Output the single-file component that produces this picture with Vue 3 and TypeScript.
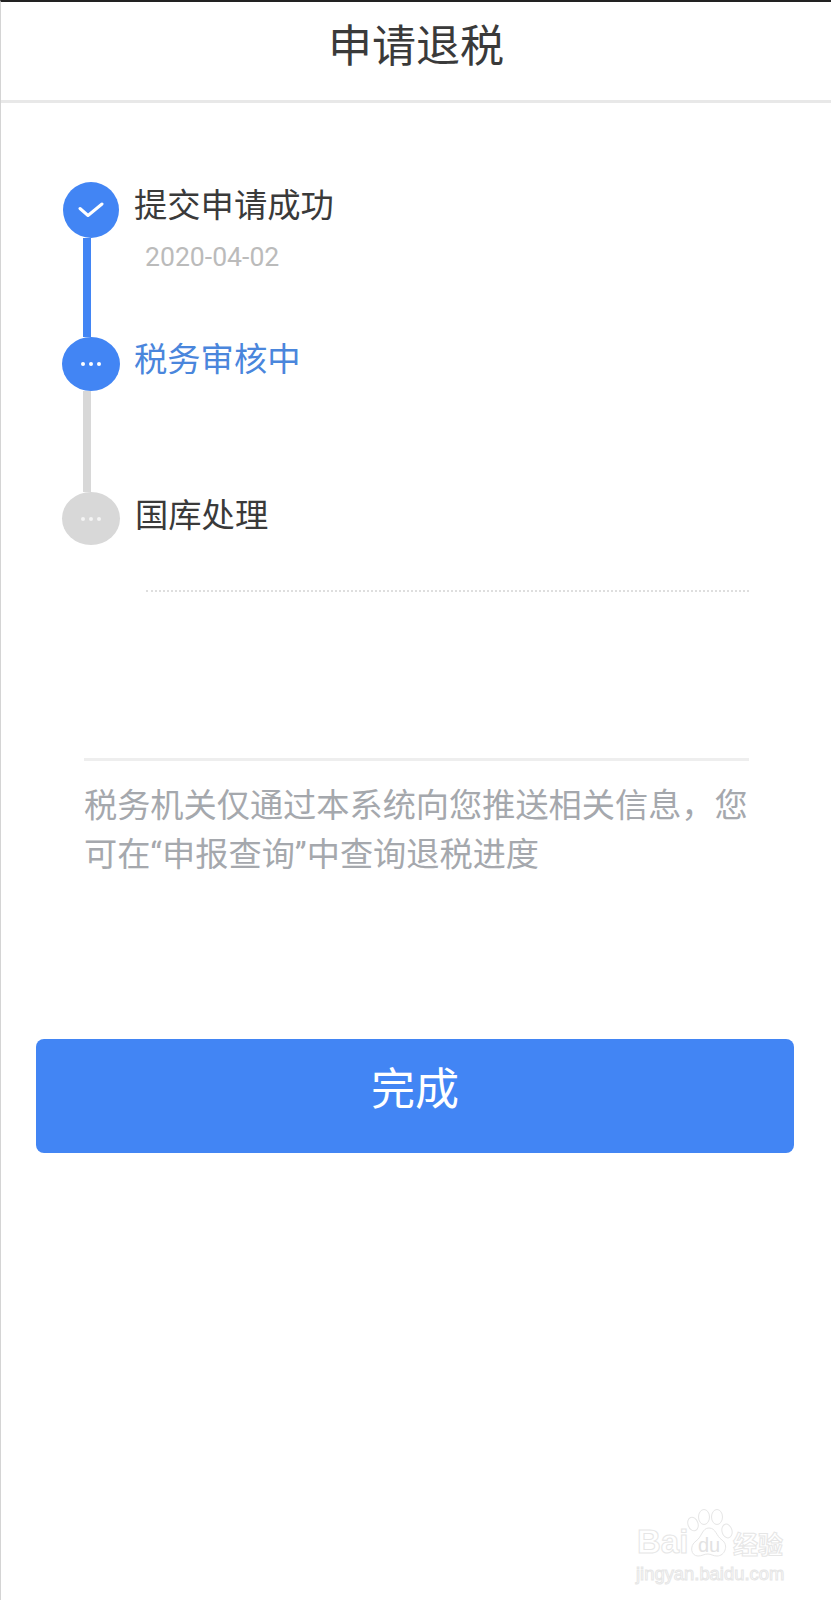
<script setup lang="ts">
interface Step {
  title: string
  date?: string
  state: 'done' | 'active' | 'todo'
}

const steps: Step[] = [
  { title: '提交申请成功', date: '2020-04-02', state: 'done' },
  { title: '税务审核中', state: 'active' },
  { title: '国库处理', state: 'todo' },
]
</script>

<template>
  <div class="page">
    <header class="header">申请退税</header>

    <section class="timeline">
      <div v-for="(step, i) in steps" :key="step.title" class="step" :class="step.state">
        <div class="rail">
          <div class="dot">
            <svg v-if="step.state === 'done'" width="26" height="16" viewBox="0 0 26 16">
              <path d="M2 6.5 L10 13.5 L24 2" fill="none" stroke="#fff" stroke-width="3" stroke-linecap="round" stroke-linejoin="round" />
            </svg>
            <span v-else class="dots"><i></i><i></i><i></i></span>
          </div>
          <div v-if="i < steps.length - 1" class="line"></div>
        </div>
        <div class="body">
          <div class="title">{{ step.title }}</div>
          <div v-if="step.date" class="date">{{ step.date }}</div>
        </div>
      </div>
    </section>

    <div class="dotted"></div>

    <section class="notice">
      <p>税务机关仅通过本系统向您推送相关信息，您可在“申报查询”中查询退税进度</p>
    </section>

    <button class="finish" type="button">完成</button>

    <div class="watermark">
      <svg class="paw" width="46" height="50" viewBox="0 0 46 50">
        <g fill="#fff" stroke="#e6e6e6" stroke-width="1">
          <ellipse cx="6" cy="15" rx="5" ry="7" transform="rotate(-20 6 15)" />
          <ellipse cx="17" cy="8" rx="5.5" ry="7.5" />
          <ellipse cx="30" cy="8" rx="5.5" ry="7.5" />
          <ellipse cx="40" cy="22" rx="5" ry="7" transform="rotate(-15 40 22)" />
          <path d="M22 19 C29 19 29 27 35 31 C42 36 38 47 30 47 C26 47 24 45 21 45 C17 45 15 47 11 47 C4 47 2 37 9 32 C15 28 15 19 22 19 Z" />
        </g>
      </svg>
      <span class="wm-bai">Bai</span>
      <span class="wm-du">du</span>
      <span class="wm-cn">经验</span>
      <span class="wm-url">jingyan.baidu.com</span>
    </div>
  </div>
</template>

<style scoped>
.page {
  position: relative;
  box-sizing: border-box;
  width: 831px;
  height: 1600px;
  overflow: hidden;
  background: #fff;
  border-top: 2px solid #222;
  border-left: 1px solid #d4d4d4;
  font-family: "Noto Sans CJK SC", "Noto Sans", sans-serif;
  color: #3a3a3a;
}

.header {
  box-sizing: border-box;
  height: 101px;
  line-height: 82px;
  border-bottom: 3px solid #e8e8e8;
  text-align: center;
  font-size: 44px;
  color: #3a3a3a;
}

.timeline {
  display: flex;
  flex-direction: column;
  padding: 79px 0 0 61px;
}

.step {
  display: flex;
  gap: 14px;
  height: 155px;
}

.step.todo {
  height: 53px;
}

.rail {
  display: flex;
  flex-direction: column;
  align-items: flex-start;
  width: 58px;
}

.dot {
  display: flex;
  flex: none;
  align-items: center;
  justify-content: center;
  width: 58px;
  height: 54px;
  border-radius: 50%;
  background: #4285f4;
}

.done .dot {
  width: 56px;
  height: 56px;
  margin-left: 1px;
}

.todo .dot {
  height: 53px;
  background: #d8d8d8;
}

.line {
  flex: 1;
  width: 8px;
  margin-left: 21px;
  background: #4285f4;
}

.active .line {
  background: #d8d8d8;
}

.dots {
  display: flex;
  gap: 4px;
}

.dots i {
  width: 4px;
  height: 4px;
  border-radius: 50%;
  background: #fff;
}

.todo .dots i {
  background: #f4f4f4;
}

.body {
  margin-top: -1px;
}

.done .body {
  margin-top: 0;
}

.todo .body {
  margin: 0 0 0 1px;
}

.title {
  font-size: 33.3px;
  line-height: 42px;
  white-space: nowrap;
  color: #3a3a3a;
}

.active .title {
  color: #4a86dc;
}

.date {
  margin: 13px 0 0 11px;
  font-family: Roboto, "Noto Sans", sans-serif;
  font-size: 26.6px;
  line-height: 40px;
  color: #bbb;
}

.dotted {
  margin: 45px 82px 0 145px;
  border-top: 2px dotted #dedede;
}

.notice {
  margin: 166px 82px 0 83px;
  border-top: 3px solid #eee;
}

/* latin font first so the quotes come out narrow like the original */
.notice p {
  margin: 20px 0 0;
  font-family: Roboto, "Noto Sans CJK SC", sans-serif;
  font-size: 33.2px;
  line-height: 49px;
  color: #a5a8ad;
}

.finish {
  display: block;
  box-sizing: border-box;
  width: 758px;
  height: 114px;
  margin: 160px 0 0 35px;
  padding: 0 0 20px;
  border: 0;
  border-radius: 8px;
  background: #4285f4;
  color: #fff;
  font-family: inherit;
  font-size: 44px;
  line-height: 1;
}

/* baidu watermark sits over the page corner */
.watermark {
  position: absolute;
  left: 635px;
  top: 1506px;
  width: 150px;
  height: 76px;
  color: #fff;
  font-family: "Liberation Sans", sans-serif;
  -webkit-text-stroke: 1px #e6e6e6;
}

.paw {
  position: absolute;
  left: 51px;
  top: 1px;
}

.wm-bai {
  position: absolute;
  left: 1px;
  top: 17px;
  font-size: 33px;
  font-weight: 700;
  line-height: 34px;
}

.wm-du {
  position: absolute;
  left: 62px;
  top: 26px;
  font-size: 20px;
  line-height: 22px;
  -webkit-text-stroke: 0;
  color: #e2e2e2;
}

.wm-cn {
  position: absolute;
  left: 97px;
  top: 21px;
  font-family: "Noto Sans CJK SC", sans-serif;
  font-size: 25px;
  font-weight: 700;
  line-height: 28px;
  white-space: nowrap;
}

.wm-url {
  position: absolute;
  left: 0;
  top: 55px;
  font-size: 18.4px;
  line-height: 22px;
  white-space: nowrap;
}
</style>
